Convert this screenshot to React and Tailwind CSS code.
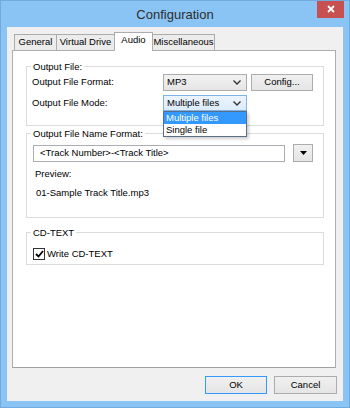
import React from "react";

const ui = { fontFamily: '"Liberation Sans", Arial, sans-serif' };

function Chevron() {
    return (
        <svg width="8" height="5" viewBox="0 0 8 5" className="shrink-0">
            <path d="M0.5 0.5 L4 4 L7.5 0.5" fill="none" stroke="#333" strokeWidth="1.4" />
        </svg>
    );
}

function Group({ label, className, children }) {
    return (
        <div className={`relative border border-[#dcdcdc] ${className}`}>
            <span className="absolute left-[4px] top-[-7px] bg-white px-[2px] leading-[13px]">
                {label}
            </span>
            {children}
        </div>
    );
}

export default function App() {
    const tabs = [
        { name: "General", w: "w-[43px]" },
        { name: "Virtual Drive", w: "w-[59px]" },
        { name: "Audio", w: "w-[39px]", active: true },
        { name: "Miscellaneous", w: "w-[63px]" },
    ];

    return (
        <div
            style={ui}
            className="w-[350px] h-[408px] bg-[#8ac4f5] border border-[#72aae0] flex flex-col text-[9.5px] text-black overflow-hidden"
        >
            {/* Title bar */}
            <div className="relative h-[26px] flex items-center justify-center">
                <span className="text-[13px] text-[#2d2d2d] mt-[1px]">Configuration</span>
                <div className="absolute top-[-1px] right-[5px] w-[27px] h-[18px] bg-[#c75050] flex items-center justify-center">
                    <svg width="8" height="8" viewBox="0 0 8 8">
                        <path d="M1 1 L7 7 M7 1 L1 7" stroke="#fff" strokeWidth="1.8" />
                    </svg>
                </div>
            </div>

            {/* Client */}
            <div className="mx-[6px] mb-[6px] flex-1 bg-[#f0f0f0] flex flex-col pl-[5px] pr-[7px] pt-[5px]">
                {/* Tabs */}
                <div className="h-[18px] flex items-end pl-[2px]">
                    {tabs.map((t, i) =>
                        t.active ? (
                            <div
                                key={t.name}
                                className={`${t.w} h-[19px] -ml-px mb-[-1px] relative z-10 bg-white border border-b-0 border-[#acacac] flex items-center justify-center pb-[3px]`}
                            >
                                {t.name}
                            </div>
                        ) : (
                            <div
                                key={t.name}
                                className={`${t.w} h-[16px] ${i === 0 ? "" : "-ml-px"} bg-[#ececec] border border-b-0 border-[#acacac] flex items-center justify-center`}
                            >
                                {t.name}
                            </div>
                        )
                    )}
                </div>

                {/* Panel */}
                <div className="h-[318px] bg-white border border-[#adadad] border-b-[#a0a0a0] pl-[13px] pr-[11px] pt-[15px]">
                    <Group label="Output File:" className="h-[60px] pl-[5px] pt-[7px]">
                        <div className="flex items-center h-[17px]">
                            <span className="w-[131px]">Output File Format:</span>
                            <div className="w-[84px] h-[17px] border border-[#acacac] bg-gradient-to-b from-[#f2f2f2] to-[#e5e5e5] flex items-center justify-between pl-[3px] pr-[5px]">
                                <span>MP3</span>
                                <Chevron />
                            </div>
                            <div className="ml-[4px] w-[62px] h-[17px] border border-[#acacac] bg-gradient-to-b from-[#f0f0f0] to-[#e5e5e5] flex items-center justify-center">
                                Config...
                            </div>
                        </div>
                        <div className="flex items-center h-[16px] mt-[4px]">
                            <span className="w-[131px]">Output File Mode:</span>
                            <div className="relative w-[84px] h-[16px] border border-[#7eb4ea] bg-gradient-to-b from-[#ecf4fc] to-[#dcecfc] flex items-center justify-between pl-[3px] pr-[5px]">
                                <span>Multiple files</span>
                                <Chevron />
                                <div className="absolute left-[-1px] top-[15px] w-[84px] h-[26px] bg-white border border-[#5a6e86] z-20 shadow-[2px_2px_3px_rgba(0,0,0,0.2)] flex flex-col">
                                    <div className="h-[12px] bg-[#3399ff] text-white leading-[12px] pl-[2px]">
                                        Multiple files
                                    </div>
                                    <div className="h-[12px] leading-[12px] pl-[2px]">Single file</div>
                                </div>
                            </div>
                        </div>
                    </Group>

                    <Group label="Output File Name Format:" className="mt-[7px] h-[85px] pl-[6px] pt-[10px]">
                        <div className="flex items-center">
                            <div className="w-[252px] h-[17px] border border-[#abadb3] bg-white flex items-center pl-[6px]">
                                &lt;Track Number&gt;-&lt;Track Title&gt;
                            </div>
                            <div className="ml-[8px] w-[20px] h-[18px] border border-[#acacac] bg-gradient-to-b from-[#f0f0f0] to-[#e5e5e5] flex items-center justify-center">
                                <svg width="7" height="4" viewBox="0 0 7 4">
                                    <path d="M0 0 H7 L3.5 4 Z" fill="#000" />
                                </svg>
                            </div>
                        </div>
                        <div className="pl-[2px] mt-[5px] leading-[13px]">Preview:</div>
                        <div className="pl-[3px] mt-[6px] leading-[13px]">01-Sample Track Title.mp3</div>
                    </Group>

                    <Group label="CD-TEXT" className="mt-[14px] h-[33px] pl-[6px] pt-[14px]">
                        <div className="flex items-center">
                            <div className="w-[12px] h-[12px] border border-[#333] bg-white flex items-center justify-center">
                                <svg width="9" height="8" viewBox="0 0 9 8">
                                    <path d="M1 4 L3.5 6.5 L8 1" fill="none" stroke="#000" strokeWidth="1.8" />
                                </svg>
                            </div>
                            <span className="ml-[2px]">Write CD-TEXT</span>
                        </div>
                    </Group>
                </div>

                {/* Buttons */}
                <div className="mt-[8px] flex justify-end gap-[7px] mr-[-1px]">
                    <div className="w-[62px] h-[18px] border border-[#3399ff] bg-gradient-to-b from-[#f0f0f0] to-[#e5e5e5] flex items-center justify-center">
                        OK
                    </div>
                    <div className="w-[63px] h-[18px] border border-[#acacac] bg-gradient-to-b from-[#f0f0f0] to-[#e5e5e5] flex items-center justify-center">
                        Cancel
                    </div>
                </div>
            </div>
        </div>
    );
}
